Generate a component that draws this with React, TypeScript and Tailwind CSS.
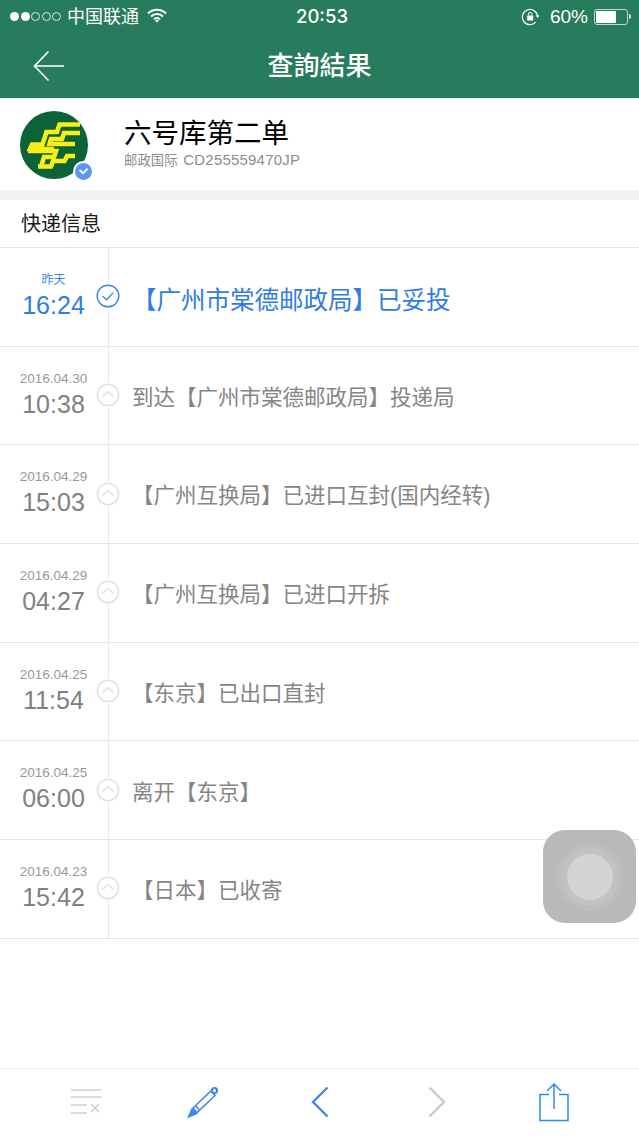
const rows = [
  { date: "2016.04.30", time: "10:38", text: "到达【广州市棠德邮政局】投递局" },
  { date: "2016.04.29", time: "15:03", text: "【广州互换局】已进口互封(国内经转)" },
  { date: "2016.04.29", time: "04:27", text: "【广州互换局】已进口开拆" },
  { date: "2016.04.25", time: "11:54", text: "【东京】已出口直封" },
  { date: "2016.04.25", time: "06:00", text: "离开【东京】" },
  { date: "2016.04.23", time: "15:42", text: "【日本】已收寄" },
];

function StatusBar() {
  return (
    <div className="grid h-[33px] grid-cols-[1fr_auto_1fr] items-center pl-[10px] pr-[8px] text-white">
      <div className="flex items-center">
        <div className="flex gap-[1.5px]">
          <span className="h-[9px] w-[9px] rounded-full bg-white" />
          <span className="h-[9px] w-[9px] rounded-full bg-white" />
          <span className="h-[9px] w-[9px] rounded-full border border-white/80" />
          <span className="h-[9px] w-[9px] rounded-full border border-white/80" />
          <span className="h-[9px] w-[9px] rounded-full border border-white/80" />
        </div>
        <span className="ml-[6px] text-[18px] leading-none">中国联通</span>
        <svg className="ml-[8px] mb-[3px]" width="20" height="15" viewBox="0 0 20 15" fill="none" stroke="white" strokeWidth="2">
          <path d="M1 5.5a12.5 12.5 0 0 1 18 0" />
          <path d="M4 8.5a8.2 8.2 0 0 1 12 0" />
          <path d="M7 11.3a4 4 0 0 1 6 0" />
          <path d="M10 14.6l-2-2a3 3 0 0 1 4 0z" fill="white" stroke="none" />
        </svg>
      </div>
      <span className="font-['Inter'] text-[18.5px] font-medium leading-none pl-[3px]">20:53</span>
      <div className="flex items-center justify-end">
        <svg width="20" height="18" viewBox="0 0 20 18" fill="none" stroke="white" strokeWidth="1.2">
          <path d="M16.6 9a7.6 7.6 0 1 0-2 5.2" />
          <path d="M14.6 7.4h4l-2 2.6z" fill="white" stroke="none" />
          <rect x="6.2" y="7.6" width="6" height="4.8" rx="0.6" fill="white" stroke="none" />
          <path d="M7.4 7.6V6.2a1.8 1.8 0 0 1 3.6 0v1.4" strokeWidth="1" />
        </svg>
        <span className="ml-[9px] font-['Liberation_Sans'] text-[19px] leading-none">60%</span>
        <div className="ml-[6px] flex items-center">
          <div className="h-[16px] w-[34px] rounded-[3px] border border-white/70 p-[1px]">
            <div className="h-full w-[20px] rounded-[1px] bg-white" />
          </div>
          <span className="ml-[1px] h-[5px] w-[2px] rounded-r-sm bg-white/80" />
        </div>
      </div>
    </div>
  );
}

function NavBar() {
  return (
    <div className="grid h-[66px] grid-cols-[1fr_auto_1fr] items-center pl-[33px] border-b border-[#e4eee9]">
      <svg width="32" height="32" viewBox="0 0 32 32" fill="none" stroke="white" strokeWidth="1.6">
        <path d="M31 16H2M15.5 1.5L1.5 16l14 14.5" />
      </svg>
      <span className="pr-[33px] text-[26px] font-medium leading-none text-white">查詢結果</span>
      <span />
    </div>
  );
}

function PostLogo() {
  return (
    <div className="relative h-[68px] w-[68px]">
      <svg width="68" height="68" viewBox="0 0 68 68" fill="none">
        <circle cx="34" cy="34" r="34" fill="#0b6337" />
        <g stroke="#f7ee1a" strokeWidth="4.6" strokeLinejoin="miter">
          <path d="M60 13.5H39.5L37 21H26.5L22.5 33.5H12L10 38H34" />
          <path d="M60 22H44L42 28H31L29.5 33H55" />
          <path d="M8 40H36L34 46H24L21 56" />
          <path d="M55 45H47L44.5 50H33L31 55.5H18" />
        </g>
      </svg>
      <div className="absolute bottom-[-3px] right-[-6px] box-content flex h-[17px] w-[17px] items-center justify-center rounded-full border-2 border-white bg-[#5b96f2]">
        <svg width="11" height="8" viewBox="0 0 11 8" fill="none" stroke="white" strokeWidth="2">
          <path d="M1.5 3l3.5 3.2 4.5-4.5" />
        </svg>
      </div>
    </div>
  );
}

function RowIcon({ active }: { active?: boolean }) {
  return (
    <div className="absolute left-[96px] top-1/2 mt-[-0.5px] -translate-y-1/2 rounded-full bg-white">
      {active ? (
        <svg width="24" height="24" viewBox="0 0 24 24" fill="none" stroke="#3d86e6" strokeWidth="1.4">
          <circle cx="12" cy="12" r="10.8" />
          <path d="M6.8 12.2l3.8 3.6 6.6-7.2" />
        </svg>
      ) : (
        <svg width="24" height="24" viewBox="0 0 24 24" fill="none" stroke="#dedede" strokeWidth="1.4">
          <circle cx="12" cy="12" r="10.6" />
          <path d="M6.5 13.6L12 8.6l5.5 5" />
        </svg>
      )}
    </div>
  );
}

function Row({ date, time, text, active }: { date: string; time: string; text: string; active?: boolean }) {
  return (
    <div className="relative flex h-[98.7px] items-stretch border-b border-[#e6e6e6]">
      <div className="flex w-[109px] flex-col items-center border-r border-[#e8e8e8] pr-[1px] pt-[23px]">
        {active ? (
          <span className="h-[18px] text-[12px] leading-[18px] text-[#3d86e6]">{date}</span>
        ) : (
          <span className="h-[18px] font-['Liberation_Sans'] text-[13.5px] leading-[18px] text-[#999999]">{date}</span>
        )}
        <span className={active ? "font-['Liberation_Sans'] text-[25px] leading-[32px] text-[#2f7de1]" : "font-['Liberation_Sans'] text-[25px] leading-[32px] text-[#808080]"}>
          {time}
        </span>
      </div>
      <RowIcon active={active} />
      {active ? (
        <div className="flex flex-1 items-center pl-[23px] pt-[9px]">
          <span className="text-[24.5px] leading-none text-[#2f7de1]">{text}</span>
        </div>
      ) : (
        <div className="flex flex-1 items-center pl-[23px] pt-[6px]">
          <span className="text-[21.5px] leading-none text-[#858585]">{text}</span>
        </div>
      )}
    </div>
  );
}

function BottomBar() {
  return (
    <div className="grid h-[68px] grid-cols-5 items-center border-t border-[#ececec] px-[27px] pb-[1px]">
      <div className="flex justify-center">
        <svg width="30" height="26" viewBox="0 0 30 26" fill="none" stroke="#cfcfcf" strokeWidth="1.6">
          <path d="M0 1h30M0 8h30M0 16h16M0 24h16M20 15l8 8M28 15l-8 8" />
        </svg>
      </div>
      <div className="flex justify-center">
        <svg width="32" height="32" viewBox="0 0 32 32" fill="none" stroke="#4088ea" strokeWidth="1.6">
          <path d="M6 22L24 5l4 4.5L10 26.5z" />
          <path d="M8.4 19.8l4 4.2" />
          <circle cx="27.5" cy="4.5" r="2.6" strokeWidth="2" />
          <path d="M5 23L1.5 31l8-3.6z" fill="#4088ea" />
        </svg>
      </div>
      <div className="flex justify-center">
        <svg width="18" height="32" viewBox="0 0 18 32" fill="none" stroke="#4088ea" strokeWidth="2.4">
          <path d="M16.5 1.5L2 16l14.5 14.5" />
        </svg>
      </div>
      <div className="flex justify-center">
        <svg width="18" height="32" viewBox="0 0 18 32" fill="none" stroke="#c9c9c9" strokeWidth="2.4">
          <path d="M1.5 1.5L16 16 1.5 30.5" />
        </svg>
      </div>
      <div className="flex justify-center">
        <svg width="30" height="40" viewBox="0 0 30 40" fill="none" stroke="#2f8bf5" strokeWidth="1.5">
          <path d="M10 12.5H1v26h28v-26h-9" />
          <path d="M15 27V2M8 9l7-7 7 7" />
        </svg>
      </div>
    </div>
  );
}

export default function App() {
  return (
    <div className="relative flex h-[1136px] w-[639px] flex-col overflow-hidden bg-white font-['Liberation_Sans','Noto_Sans_CJK_SC',sans-serif]">
      <div className="bg-[#267c5c]">
        <StatusBar />
        <NavBar />
      </div>

      <div className="flex h-[91px] items-center pl-[20px]">
        <PostLogo />
        <div className="ml-[36px] flex flex-col pb-[2px]">
          <span className="text-[27.5px] leading-[34px] text-black">六号库第二单</span>
          <span className="text-[13.4px] leading-[18px] text-[#8c8c8c]">
            邮政国际 <span className="ml-[2px] text-[15px] tracking-[0.2px]">CD255559470JP</span>
          </span>
        </div>
      </div>
      <div className="h-[10px] bg-[#f2f2f2]" />

      <div className="flex h-[48px] items-center border-b border-[#e6e6e6] pl-[21px] text-[20px] text-[#1a1a1a]">快递信息</div>

      <Row active date="昨天" time="16:24" text="【广州市棠德邮政局】已妥投" />
      {rows.map((r) => (
        <Row key={r.date + r.time} date={r.date} time={r.time} text={r.text} />
      ))}

      <div className="flex-1" />
      <BottomBar />

      <div className="absolute left-[543px] top-[830px] flex h-[93px] w-[93px] items-center justify-center rounded-[22px] bg-[#b9b9b9]">
        <div className="flex h-[68px] w-[68px] items-center justify-center rounded-full bg-[#bdbdbd]">
          <div className="flex h-[58px] w-[58px] items-center justify-center rounded-full bg-[#c2c2c2]">
            <div className="h-[46px] w-[46px] rounded-full bg-[#d4d4d4]" />
          </div>
        </div>
      </div>
    </div>
  );
}
